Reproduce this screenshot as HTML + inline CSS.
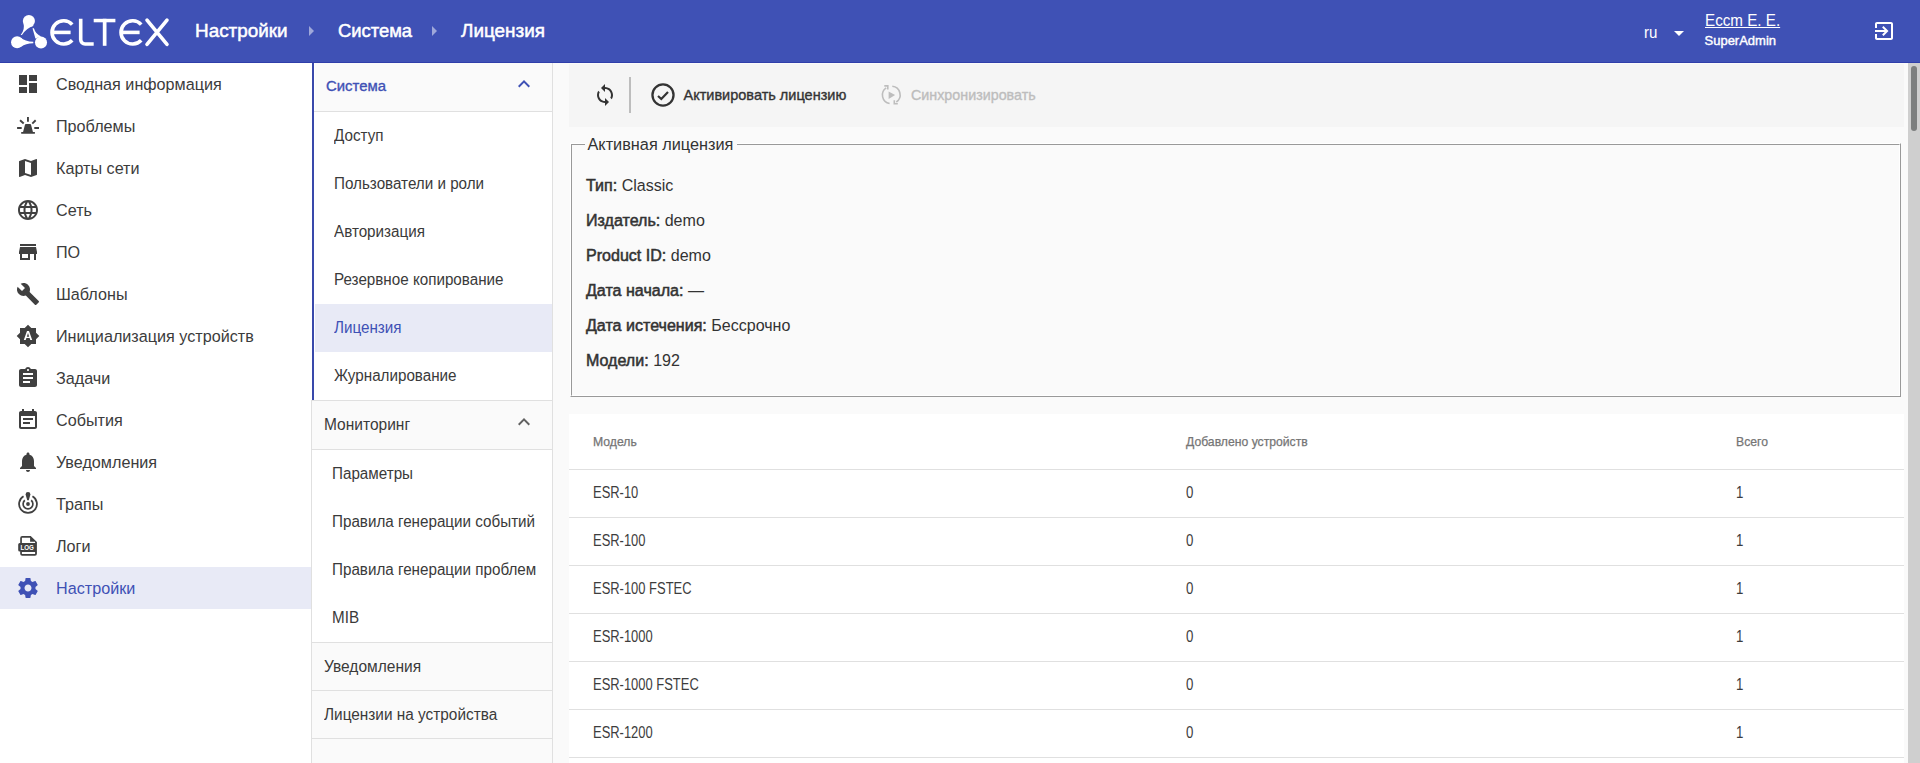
<!DOCTYPE html>
<html><head><meta charset="utf-8">
<style>
*{box-sizing:border-box;margin:0;padding:0}
html,body{width:1920px;height:763px;overflow:hidden;background:#fff;font-family:"Liberation Sans",sans-serif}
body{position:relative}
.t{position:absolute;line-height:1;white-space:nowrap}
.r{position:absolute}
.i{position:absolute;overflow:visible}
</style></head>
<body>
<div class="r" style="left:0px;top:0px;width:1920px;height:62px;background:#3f51b5;"></div>
<div class="r" style="left:0px;top:62px;width:1920px;height:1px;background:#2f3eaa;"></div>
<svg class="i" style="left:0;top:0;width:180px;height:62px" viewBox="0 0 180 62">
<g fill="#fff">
<circle cx="28.9" cy="21" r="6.06"/>
<circle cx="17.1" cy="42.2" r="6.06"/>
<circle cx="41" cy="42.5" r="6.06"/>
<path d="M23.4 23.2Q25.2 29 20.7 35.1L22 35.1Q26 28.3 33.9 25.8Z"/>
<path d="M20.5 37.5Q25 41.6 33.3 41.7L33.3 43.3Q25.5 43.4 21.2 46.8Z"/>
<path d="M35.4 38.4L32.5 28.3L33.9 28.2Q35.6 34.2 41.2 36.4Z"/>
</g>
<g fill="none" stroke="#fff" stroke-width="3.6">
<path d="M72.2 24.6 A11.6 11.6 0 1 0 72.2 40.2"/>
<path d="M141.2 24.6 A11.6 11.6 0 1 0 141.2 40.2"/>
<path d="M147 20.1 L167 44.4 M167 20.1 L147 44.4" stroke-linecap="round"/>
<path d="M80.7 18.8V39.6A4.4 4.4 0 0 0 85.1 44H93.7"/>
</g>
<g fill="#fff">
<rect x="51.9" y="30.6" width="18.7" height="3.6"/>
<rect x="120.9" y="30.6" width="18.7" height="3.6"/>
<rect x="93.7" y="18.8" width="21.7" height="3.5"/>
<rect x="102.8" y="18.8" width="3.7" height="27"/>
</g></svg>
<div class="t" style="left:195px;top:22.00px;font-size:18.9px;color:#fff;font-weight:normal;-webkit-text-stroke:0.5px #fff">Настройки</div>
<svg class="i" style="left:299px;top:19px;width:24px;height:24px;color:rgba(255,255,255,.5);" viewBox="0 0 24 24" fill="rgba(255,255,255,.5)" color="rgba(255,255,255,.5)"><path d="M10 17l5-5-5-5z"/></svg>
<div class="t" style="left:338px;top:22.42px;font-size:18.4px;color:#fff;font-weight:normal;-webkit-text-stroke:0.5px #fff">Система</div>
<svg class="i" style="left:422px;top:19px;width:24px;height:24px;color:rgba(255,255,255,.5);" viewBox="0 0 24 24" fill="rgba(255,255,255,.5)" color="rgba(255,255,255,.5)"><path d="M10 17l5-5-5-5z"/></svg>
<div class="t" style="left:461px;top:22.00px;font-size:18.9px;color:#fff;font-weight:normal;-webkit-text-stroke:0.5px #fff">Лицензия</div>
<div class="t" style="left:1644px;top:24.78px;font-size:16.8px;color:#fff;font-weight:normal;transform:scaleX(0.9);transform-origin:0 0;">ru</div>
<svg class="i" style="left:1667px;top:21px;width:24px;height:24px;color:#fff;" viewBox="0 0 24 24" fill="#fff" color="#fff"><path d="M7 10l5 5 5-5z"/></svg>
<div class="t" style="left:1705px;top:12.12px;font-size:16.4px;color:#fff;font-weight:normal;transform:scaleX(0.927);transform-origin:0 0;"><span style="text-decoration:underline;text-underline-offset:1px">Eccm E. E.</span></div>
<div class="t" style="left:1704.5px;top:34.00px;font-size:13px;color:#fff;font-weight:normal;-webkit-text-stroke:0.4px #fff">SuperAdmin</div>
<svg class="i" style="left:1872px;top:19px;width:24px;height:24px;color:#fff;" viewBox="0 0 24 24" fill="#fff" color="#fff"><path d="M10.09 15.59L11.5 17l5-5-5-5-1.41 1.41L12.67 11H3v2h9.67l-2.58 2.59zM19 3H5c-1.11 0-2 .9-2 2v4h2V5h14v14H5v-4H3v4c0 1.1.89 2 2 2h14c1.1 0 2-.9 2-2V5c0-1.1-.9-2-2-2z"/></svg>
<svg class="i" style="left:16px;top:72px;width:24px;height:24px;color:#404040;" viewBox="0 0 24 24" fill="#404040" color="#404040"><path d="M3 13h8V3H3v10zm0 8h8v-6H3v6zm10 0h8V11h-8v10zm0-18v6h8V3h-8z"/></svg>
<div class="t" style="left:56px;top:76.27px;font-size:17.4px;color:#3c3c3c;font-weight:normal;transform:scaleX(0.93);transform-origin:0 0;">Сводная информация</div>
<svg class="i" style="left:16px;top:114px;width:24px;height:24px;color:#404040;" viewBox="0 0 24 24" fill="#404040" color="#404040"><path d="M11 3h1.9v4.7H11zM1.1 13h4.6v1.9H1.1zM18.3 13H23v1.9h-4.7zM5.2 18h13.7v1.8H5.2z"/>
<path d="M4.05 6.26L7.7 9.56" stroke="currentColor" stroke-width="1.9"/><path d="M19.65 6.26L16.3 9.56" stroke="currentColor" stroke-width="1.9"/>
<path d="M9.9 10.1h4.2a1 1 0 0 1 .95.7L17 18.3H7l1.95-7.5a1 1 0 0 1 .95-.7z"/></svg>
<div class="t" style="left:56px;top:118.27px;font-size:17.4px;color:#3c3c3c;font-weight:normal;transform:scaleX(0.93);transform-origin:0 0;">Проблемы</div>
<svg class="i" style="left:16px;top:156px;width:24px;height:24px;color:#404040;" viewBox="0 0 24 24" fill="#404040" color="#404040"><path d="M20.5 3l-.16.03L15 5.1 9 3 3.36 4.9c-.21.07-.36.25-.36.48V20.5c0 .28.22.5.5.5l.16-.03L9 18.9l6 2.1 5.64-1.9c.21-.07.36-.25.36-.48V3.5c0-.28-.22-.5-.5-.5zM15 19l-6-2.11V5l6 2.11V19z"/></svg>
<div class="t" style="left:56px;top:160.27px;font-size:17.4px;color:#3c3c3c;font-weight:normal;transform:scaleX(0.93);transform-origin:0 0;">Карты сети</div>
<svg class="i" style="left:16px;top:198px;width:24px;height:24px;color:#404040;" viewBox="0 0 24 24" fill="#404040" color="#404040"><path d="M11.99 2C6.47 2 2 6.48 2 12s4.47 10 9.99 10C17.52 22 22 17.52 22 12S17.52 2 11.99 2zm6.93 6h-2.95c-.32-1.25-.78-2.45-1.38-3.56 1.84.63 3.37 1.91 4.33 3.56zM12 4.04c.83 1.2 1.48 2.530 1.91 3.96h-3.82c.43-1.43 1.08-2.76 1.91-3.96zM4.26 14C4.1 13.36 4 12.69 4 12s.1-1.36.26-2h3.38c-.08.66-.14 1.32-.14 2 0 .68.06 1.34.14 2H4.26zm.82 2h2.95c.32 1.25.78 2.45 1.38 3.56-1.84-.63-3.37-1.9-4.33-3.56zm2.95-8H5.08c.96-1.66 2.49-2.93 4.330-3.56C8.81 5.55 8.35 6.75 8.03 8zM12 19.96c-.83-1.2-1.48-2.53-1.91-3.96h3.82c-.43 1.43-1.080 2.76-1.91 3.96zM14.34 14H9.66c-.09-.66-.16-1.32-.16-2 0-.68.07-1.35.16-2h4.68c.09.65.16 1.32.16 2 0 .68-.07 1.34-.16 2zm.25 5.56c.6-1.11 1.06-2.31 1.38-3.56h2.95c-.96 1.65-2.49 2.93-4.33 3.56zM16.36 14c.08-.66.14-1.32.14-2 0-.68-.06-1.34-.14-2h3.38c.16.64.26 1.31.26 2s-.1 1.36-.26 2h-3.38z"/></svg>
<div class="t" style="left:56px;top:202.27px;font-size:17.4px;color:#3c3c3c;font-weight:normal;transform:scaleX(0.93);transform-origin:0 0;">Сеть</div>
<svg class="i" style="left:16px;top:240px;width:24px;height:24px;color:#404040;" viewBox="0 0 24 24" fill="#404040" color="#404040"><path d="M20 4H4v2h16V4zm1 10v-2l-1-5H4l-1 5v2h1v6h10v-6h4v6h2v-6h1zm-9 4H6v-4h6v4z"/></svg>
<div class="t" style="left:56px;top:244.27px;font-size:17.4px;color:#3c3c3c;font-weight:normal;transform:scaleX(0.93);transform-origin:0 0;">ПО</div>
<svg class="i" style="left:16px;top:282px;width:24px;height:24px;color:#404040;" viewBox="0 0 24 24" fill="#404040" color="#404040"><path d="M22.7 19l-9.1-9.1c.9-2.3.4-5-1.5-6.9-2-2-5-2.4-7.4-1.3L9 6 6 9 1.6 4.7C.4 7.1.9 10.1 2.9 12.1c1.9 1.9 4.6 2.4 6.9 1.5l9.1 9.1c.4.4 1 .4 1.4 0l2.3-2.3c.5-.4.5-1.1.1-1.4z"/></svg>
<div class="t" style="left:56px;top:286.27px;font-size:17.4px;color:#3c3c3c;font-weight:normal;transform:scaleX(0.93);transform-origin:0 0;">Шаблоны</div>
<svg class="i" style="left:16px;top:324px;width:24px;height:24px;color:#404040;" viewBox="0 0 24 24" fill="#404040" color="#404040"><path d="M10.85 12.65h2.3L12 9l-1.15 3.65zM20 8.69V4h-4.69L12 .69 8.69 4H4v4.69L.69 12 4 15.31V20h4.69L12 23.31 15.31 20H20v-4.69L23.31 12 20 8.69zM14.3 16l-.7-2h-3.2l-.7 2H7.8L11 7h2l3.2 9h-1.9z"/></svg>
<div class="t" style="left:56px;top:328.27px;font-size:17.4px;color:#3c3c3c;font-weight:normal;transform:scaleX(0.93);transform-origin:0 0;">Инициализация устройств</div>
<svg class="i" style="left:16px;top:366px;width:24px;height:24px;color:#404040;" viewBox="0 0 24 24" fill="#404040" color="#404040"><path d="M19 3h-4.18C14.4 1.84 13.3 1 12 1c-1.3 0-2.4.84-2.82 2H5c-1.1 0-2 .9-2 2v14c0 1.1.9 2 2 2h14c1.1 0 2-.9 2-2V5c0-1.1-.9-2-2-2zm-7 0c.55 0 1 .45 1 1s-.45 1-1 1-1-.45-1-1 .45-1 1-1zm2 14H7v-2h7v2zm3-4H7v-2h10v2zm0-4H7V7h10v2z"/></svg>
<div class="t" style="left:56px;top:370.27px;font-size:17.4px;color:#3c3c3c;font-weight:normal;transform:scaleX(0.93);transform-origin:0 0;">Задачи</div>
<svg class="i" style="left:16px;top:408px;width:24px;height:24px;color:#404040;" viewBox="0 0 24 24" fill="#404040" color="#404040"><path d="M17 10H7v2h10v-2zm2-7h-1V1h-2v2H8V1H6v2H5c-1.11 0-1.99.9-1.99 2L3 19c0 1.1.89 2 2 2h14c1.1 0 2-.9 2-2V5c0-1.1-.9-2-2-2zm0 16H5V8h14v11zm-5-5H7v2h7v-2z"/></svg>
<div class="t" style="left:56px;top:412.27px;font-size:17.4px;color:#3c3c3c;font-weight:normal;transform:scaleX(0.93);transform-origin:0 0;">События</div>
<svg class="i" style="left:16px;top:450px;width:24px;height:24px;color:#404040;" viewBox="0 0 24 24" fill="#404040" color="#404040"><path d="M12 22c1.1 0 2-.9 2-2h-4c0 1.1.89 2 2 2zm6-6v-5c0-3.070-1.64-5.64-4.5-6.32V4c0-.83-.67-1.5-1.5-1.5s-1.5.67-1.5 1.5v.68C7.63 5.36 6 7.92 6 11v5l-2 2v1h16v-1l-2-2z"/></svg>
<div class="t" style="left:56px;top:454.27px;font-size:17.4px;color:#3c3c3c;font-weight:normal;transform:scaleX(0.93);transform-origin:0 0;">Уведомления</div>
<svg class="i" style="left:16px;top:492px;width:24px;height:24px;color:#404040;" viewBox="0 0 24 24" fill="#404040" color="#404040"><circle cx="12" cy="12" r="1.9"/>
<path d="M15.15 8.25A4.9 4.9 0 1 1 8.85 8.25" fill="none" stroke="currentColor" stroke-width="1.7"/>
<path d="M16.45 4.3A8.9 8.9 0 1 1 7.55 4.3" fill="none" stroke="currentColor" stroke-width="1.8"/>
<path d="M9.6 2.4a2.4 2.4 0 0 1 4.8 0L12.8 8.3h-1.6z"/></svg>
<div class="t" style="left:56px;top:496.27px;font-size:17.4px;color:#3c3c3c;font-weight:normal;transform:scaleX(0.93);transform-origin:0 0;">Трапы</div>
<svg class="i" style="left:16px;top:534px;width:24px;height:24px;color:#404040;" viewBox="0 0 24 24" fill="#404040" color="#404040"><path d="M6.2 2H14.7L20.9 7.9V19.7A2 2 0 0 1 18.9 21.7H6.2A2 2 0 0 1 4.2 19.7V17.45H3.7A1.5 1.5 0 0 1 2.2 15.95V10.5A1.5 1.5 0 0 1 3.7 9H4.2V4A2 2 0 0 1 6.2 2Z"/>
<path fill="#fff" d="M5.9 3.7H14.1V7.7H19.1V9H5.9Z M5.9 18H19.1V20H5.9Z"/>
<text x="11.2" y="16" font-family="Liberation Sans" font-weight="bold" font-size="6.6" fill="#fff" text-anchor="middle" textLength="13.4" lengthAdjust="spacingAndGlyphs">LOG</text></svg>
<div class="t" style="left:56px;top:538.27px;font-size:17.4px;color:#3c3c3c;font-weight:normal;transform:scaleX(0.93);transform-origin:0 0;">Логи</div>
<div class="r" style="left:0px;top:567px;width:311px;height:42px;background:#e8eaf6;"></div>
<svg class="i" style="left:16px;top:576px;width:24px;height:24px;color:#3f51b5;" viewBox="0 0 24 24" fill="#3f51b5" color="#3f51b5"><path d="M19.43 12.98c.04-.32.07-.64.07-.98s-.03-.66-.07-.98l2.11-1.65c.19-.15.24-.42.12-.64l-2-3.46c-.12-.22-.39-.3-.61-.22l-2.49 1c-.52-.4-1.08-.73-1.69-.98l-.38-2.65C14.46 2.18 14.25 2 14 2h-4c-.25 0-.46.18-.49.42l-.38 2.65c-.61.25-1.170.59-1.69.98l-2.49-1c-.23-.09-.49 0-.61.22l-2 3.46c-.13.22-.07.49.12.64l2.11 1.65c-.04.32-.07.65-.07.98s.03.66.07.98l-2.11 1.650c-.19.15-.24.42-.12.64l2 3.46c.12.22.39.3.61.22l2.49-1c.52.4 1.08.73 1.69.98l.38 2.65c.03.24.24.42.49.42h4c.25 0 .46-.18.49-.42l.38-2.65c.61-.25 1.17-.59 1.69-.98l2.49 1c.23.09.49 0 .61-.22l2-3.46c.12-.22.07-.49-.12-.64l-2.11-1.65zM12 15.5c-1.93 0-3.5-1.57-3.5-3.5s1.57-3.5 3.5-3.5 3.5 1.57 3.5 3.5-1.57 3.5-3.5 3.5z"/></svg>
<div class="t" style="left:56px;top:580.27px;font-size:17.4px;color:#3f51b5;font-weight:normal;transform:scaleX(0.93);transform-origin:0 0;">Настройки</div>
<div class="r" style="left:311px;top:63px;width:242px;height:700px;background:#fafafa;"></div>
<div class="r" style="left:311px;top:400px;width:1px;height:363px;background:#e0e0e0;"></div>
<div class="r" style="left:552px;top:63px;width:1px;height:700px;background:#e0e0e0;"></div>
<div class="r" style="left:311px;top:63px;width:241px;height:337px;background:#fff;"></div>
<div class="r" style="left:312px;top:63px;width:2px;height:338px;background:#3949ab;"></div>
<div class="r" style="left:315px;top:63px;width:237px;height:48px;background:#fafafa;"></div>
<div class="r" style="left:314px;top:111px;width:238px;height:1px;background:#e0e0e0;"></div>
<div class="t" style="left:326px;top:79.39px;font-size:14.9px;color:#3f51b5;font-weight:normal;-webkit-text-stroke:0.35px #3f51b5">Система</div>
<svg class="i" style="left:512px;top:72px;width:24px;height:24px;color:#3f51b5;" viewBox="0 0 24 24" fill="#3f51b5" color="#3f51b5"><path d="M12 8l-6 6 1.41 1.41L12 10.83l4.59 4.58L18 14z"/></svg>
<div class="t" style="left:334px;top:128.46px;font-size:16px;color:#3a3a3a;font-weight:normal;transform:scaleX(0.95);transform-origin:0 0;">Доступ</div>
<div class="t" style="left:334px;top:176.46px;font-size:16px;color:#3a3a3a;font-weight:normal;transform:scaleX(0.95);transform-origin:0 0;">Пользователи и роли</div>
<div class="t" style="left:334px;top:224.46px;font-size:16px;color:#3a3a3a;font-weight:normal;transform:scaleX(0.95);transform-origin:0 0;">Авторизация</div>
<div class="t" style="left:334px;top:272.46px;font-size:16px;color:#3a3a3a;font-weight:normal;transform:scaleX(0.95);transform-origin:0 0;">Резервное копирование</div>
<div class="r" style="left:315px;top:304px;width:237px;height:48px;background:#e8eaf6;"></div>
<div class="t" style="left:334px;top:320.46px;font-size:16px;color:#3f51b5;font-weight:normal;transform:scaleX(0.95);transform-origin:0 0;">Лицензия</div>
<div class="t" style="left:334px;top:368.46px;font-size:16px;color:#3a3a3a;font-weight:normal;transform:scaleX(0.95);transform-origin:0 0;">Журналирование</div>
<div class="r" style="left:311px;top:400px;width:242px;height:1px;background:#e0e0e0;"></div>
<div class="t" style="left:324px;top:417.46px;font-size:16px;color:#3a3a3a;font-weight:normal;transform:scaleX(0.97);transform-origin:0 0;">Мониторинг</div>
<svg class="i" style="left:512px;top:410px;width:24px;height:24px;color:#616161;" viewBox="0 0 24 24" fill="#616161" color="#616161"><path d="M12 8l-6 6 1.41 1.41L12 10.83l4.59 4.58L18 14z"/></svg>
<div class="r" style="left:312px;top:449px;width:240px;height:1px;background:#e0e0e0;"></div>
<div class="r" style="left:312px;top:450px;width:240px;height:192px;background:#fff;"></div>
<div class="t" style="left:332px;top:466.46px;font-size:16px;color:#3a3a3a;font-weight:normal;transform:scaleX(0.95);transform-origin:0 0;">Параметры</div>
<div class="t" style="left:332px;top:514.46px;font-size:16px;color:#3a3a3a;font-weight:normal;transform:scaleX(0.95);transform-origin:0 0;">Правила генерации событий</div>
<div class="t" style="left:332px;top:562.46px;font-size:16px;color:#3a3a3a;font-weight:normal;transform:scaleX(0.95);transform-origin:0 0;">Правила генерации проблем</div>
<div class="t" style="left:332px;top:610.46px;font-size:16px;color:#3a3a3a;font-weight:normal;transform:scaleX(0.95);transform-origin:0 0;">MIB</div>
<div class="r" style="left:312px;top:642px;width:240px;height:1px;background:#e0e0e0;"></div>
<div class="t" style="left:324px;top:659.46px;font-size:16px;color:#3a3a3a;font-weight:normal;transform:scaleX(0.97);transform-origin:0 0;">Уведомления</div>
<div class="r" style="left:312px;top:690px;width:240px;height:1px;background:#e0e0e0;"></div>
<div class="t" style="left:324px;top:707.46px;font-size:16px;color:#3a3a3a;font-weight:normal;transform:scaleX(0.96);transform-origin:0 0;">Лицензии на устройства</div>
<div class="r" style="left:312px;top:738px;width:240px;height:1px;background:#e0e0e0;"></div>
<div class="r" style="left:553px;top:63px;width:1355px;height:700px;background:#fafafa;"></div>
<div class="r" style="left:569px;top:64px;width:1335px;height:63px;background:#f5f5f5;"></div>
<svg class="i" style="left:593px;top:83px;width:24px;height:24px;color:#333" viewBox="0 0 24 24" fill="#333"><path d="M12 4V1L8 5l4 4V6c3.31 0 6 2.69 6 6 0 1.01-.25 1.97-.7 2.8l1.46 1.46C19.54 15.03 20 13.57 20 12c0-4.42-3.58-8-8-8zm0 14c-3.31 0-6-2.69-6-6 0-1.01.25-1.97.7-2.8L5.24 7.74C4.46 8.97 4 10.43 4 12c0 4.42 3.58 8 8 8v3l4-4-4-4v3z"/></svg>
<div class="r" style="left:629px;top:77px;width:2px;height:36px;background:#bdbdbd"></div>
<svg class="i" style="left:651px;top:83px;width:24px;height:24px" viewBox="0 0 24 24" fill="none" stroke="#333">
<circle cx="12" cy="12" r="10.55" stroke-width="2.3"/>
<path d="M7 13 L10.3 16 L17 9" stroke-width="2.2"/></svg>
<svg class="i" style="left:879px;top:83px;width:24px;height:24px" viewBox="0 0 24 24" fill="none" stroke="#bdbdbd" stroke-width="1.6">
<path d="M7.2 4.9A8.6 8.6 0 0 0 10.6 20.5"/><path d="M13.3 3.3A8.6 8.6 0 0 1 17.3 19"/>
<path d="M5.3 2.9H8.8V6.4"/><path d="M18.8 20.8H15.3V17.3"/>
<path d="M9.6 8.4L16.1 12L9.6 15.9z" fill="#bdbdbd" stroke="none"/></svg>
<div class="t" style="left:683.5px;top:87.73px;font-size:14.5px;color:#333;font-weight:normal;-webkit-text-stroke:0.35px #333">Активировать лицензию</div>
<div class="t" style="left:911px;top:87.90px;font-size:14.3px;color:#bdbdbd;font-weight:normal;-webkit-text-stroke:0.35px #bdbdbd">Синхронизировать</div>
<div class="r" style="left:570px;top:143px;width:1331px;height:254px;background:transparent;border-top:1px solid #fff;border-left:1px solid #fff;border-right:1px solid #999;border-bottom:1px solid #999"></div>
<div class="r" style="left:571px;top:144px;width:1329px;height:252px;background:transparent;border-top:1px solid #999;border-left:1px solid #999;border-right:1px solid #fff;border-bottom:1px solid #fff"></div>
<div class="r" style="left:585px;top:136px;width:152px;height:16px;background:#fafafa;"></div>
<div class="t" style="left:587.5px;top:136.20px;font-size:16.3px;color:#333;font-weight:normal;">Активная лицензия</div>
<div class="t" style="left:585.5px;top:177.69px;font-size:16.9px;color:#333;font-weight:normal;transform:scaleX(0.95);transform-origin:0 0;"><span style="-webkit-text-stroke:0.55px #333">Тип:</span> Classic</div>
<div class="t" style="left:585.5px;top:212.69px;font-size:16.9px;color:#333;font-weight:normal;transform:scaleX(0.95);transform-origin:0 0;"><span style="-webkit-text-stroke:0.55px #333">Издатель:</span> demo</div>
<div class="t" style="left:585.5px;top:247.69px;font-size:16.9px;color:#333;font-weight:normal;transform:scaleX(0.95);transform-origin:0 0;"><span style="-webkit-text-stroke:0.55px #333">Product ID:</span> demo</div>
<div class="t" style="left:585.5px;top:282.69px;font-size:16.9px;color:#333;font-weight:normal;transform:scaleX(0.95);transform-origin:0 0;"><span style="-webkit-text-stroke:0.55px #333">Дата начала:</span> —</div>
<div class="t" style="left:585.5px;top:317.69px;font-size:16.9px;color:#333;font-weight:normal;transform:scaleX(0.95);transform-origin:0 0;"><span style="-webkit-text-stroke:0.55px #333">Дата истечения:</span> Бессрочно</div>
<div class="t" style="left:585.5px;top:352.69px;font-size:16.9px;color:#333;font-weight:normal;transform:scaleX(0.95);transform-origin:0 0;"><span style="-webkit-text-stroke:0.55px #333">Модели:</span> 192</div>
<div class="r" style="left:569px;top:414px;width:1335px;height:349px;background:#fff;"></div>
<div class="r" style="left:569px;top:469px;width:1335px;height:1px;background:#e0e0e0;"></div>
<div class="t" style="left:593px;top:435.67px;font-size:12.2px;color:#757575;font-weight:normal;-webkit-text-stroke:0.25px #757575">Модель</div>
<div class="t" style="left:1186px;top:435.67px;font-size:12.2px;color:#757575;font-weight:normal;-webkit-text-stroke:0.25px #757575">Добавлено устройств</div>
<div class="t" style="left:1736px;top:435.67px;font-size:12.2px;color:#757575;font-weight:normal;-webkit-text-stroke:0.25px #757575">Всего</div>
<div class="t" style="left:593px;top:484.79px;font-size:15.6px;color:#3d3d3d;font-weight:normal;transform:scaleX(0.83);transform-origin:0 0;">ESR-10</div>
<div class="t" style="left:1186px;top:484.79px;font-size:15.6px;color:#3d3d3d;font-weight:normal;transform:scaleX(0.85);transform-origin:0 0;">0</div>
<div class="t" style="left:1736px;top:484.79px;font-size:15.6px;color:#3d3d3d;font-weight:normal;transform:scaleX(0.85);transform-origin:0 0;">1</div>
<div class="r" style="left:569px;top:517px;width:1335px;height:1px;background:#e0e0e0;"></div>
<div class="t" style="left:593px;top:532.79px;font-size:15.6px;color:#3d3d3d;font-weight:normal;transform:scaleX(0.83);transform-origin:0 0;">ESR-100</div>
<div class="t" style="left:1186px;top:532.79px;font-size:15.6px;color:#3d3d3d;font-weight:normal;transform:scaleX(0.85);transform-origin:0 0;">0</div>
<div class="t" style="left:1736px;top:532.79px;font-size:15.6px;color:#3d3d3d;font-weight:normal;transform:scaleX(0.85);transform-origin:0 0;">1</div>
<div class="r" style="left:569px;top:565px;width:1335px;height:1px;background:#e0e0e0;"></div>
<div class="t" style="left:593px;top:580.79px;font-size:15.6px;color:#3d3d3d;font-weight:normal;transform:scaleX(0.83);transform-origin:0 0;">ESR-100 FSTEC</div>
<div class="t" style="left:1186px;top:580.79px;font-size:15.6px;color:#3d3d3d;font-weight:normal;transform:scaleX(0.85);transform-origin:0 0;">0</div>
<div class="t" style="left:1736px;top:580.79px;font-size:15.6px;color:#3d3d3d;font-weight:normal;transform:scaleX(0.85);transform-origin:0 0;">1</div>
<div class="r" style="left:569px;top:613px;width:1335px;height:1px;background:#e0e0e0;"></div>
<div class="t" style="left:593px;top:628.79px;font-size:15.6px;color:#3d3d3d;font-weight:normal;transform:scaleX(0.83);transform-origin:0 0;">ESR-1000</div>
<div class="t" style="left:1186px;top:628.79px;font-size:15.6px;color:#3d3d3d;font-weight:normal;transform:scaleX(0.85);transform-origin:0 0;">0</div>
<div class="t" style="left:1736px;top:628.79px;font-size:15.6px;color:#3d3d3d;font-weight:normal;transform:scaleX(0.85);transform-origin:0 0;">1</div>
<div class="r" style="left:569px;top:661px;width:1335px;height:1px;background:#e0e0e0;"></div>
<div class="t" style="left:593px;top:676.79px;font-size:15.6px;color:#3d3d3d;font-weight:normal;transform:scaleX(0.83);transform-origin:0 0;">ESR-1000 FSTEC</div>
<div class="t" style="left:1186px;top:676.79px;font-size:15.6px;color:#3d3d3d;font-weight:normal;transform:scaleX(0.85);transform-origin:0 0;">0</div>
<div class="t" style="left:1736px;top:676.79px;font-size:15.6px;color:#3d3d3d;font-weight:normal;transform:scaleX(0.85);transform-origin:0 0;">1</div>
<div class="r" style="left:569px;top:709px;width:1335px;height:1px;background:#e0e0e0;"></div>
<div class="t" style="left:593px;top:724.79px;font-size:15.6px;color:#3d3d3d;font-weight:normal;transform:scaleX(0.83);transform-origin:0 0;">ESR-1200</div>
<div class="t" style="left:1186px;top:724.79px;font-size:15.6px;color:#3d3d3d;font-weight:normal;transform:scaleX(0.85);transform-origin:0 0;">0</div>
<div class="t" style="left:1736px;top:724.79px;font-size:15.6px;color:#3d3d3d;font-weight:normal;transform:scaleX(0.85);transform-origin:0 0;">1</div>
<div class="r" style="left:569px;top:757px;width:1335px;height:1px;background:#e0e0e0;"></div>
<div class="t" style="left:593px;top:772.79px;font-size:15.6px;color:#3d3d3d;font-weight:normal;transform:scaleX(0.83);transform-origin:0 0;">ESR-1500</div>
<div class="t" style="left:1186px;top:772.79px;font-size:15.6px;color:#3d3d3d;font-weight:normal;transform:scaleX(0.85);transform-origin:0 0;">0</div>
<div class="t" style="left:1736px;top:772.79px;font-size:15.6px;color:#3d3d3d;font-weight:normal;transform:scaleX(0.85);transform-origin:0 0;">1</div>
<div class="r" style="left:569px;top:805px;width:1335px;height:1px;background:#e0e0e0;"></div>
<div class="r" style="left:1908px;top:63px;width:12px;height:700px;background:#cfcfcf;"></div>
<div class="r" style="left:1911px;top:66px;width:6px;height:65px;background:#7d7f7f;border-radius:3px"></div>
</body></html>
